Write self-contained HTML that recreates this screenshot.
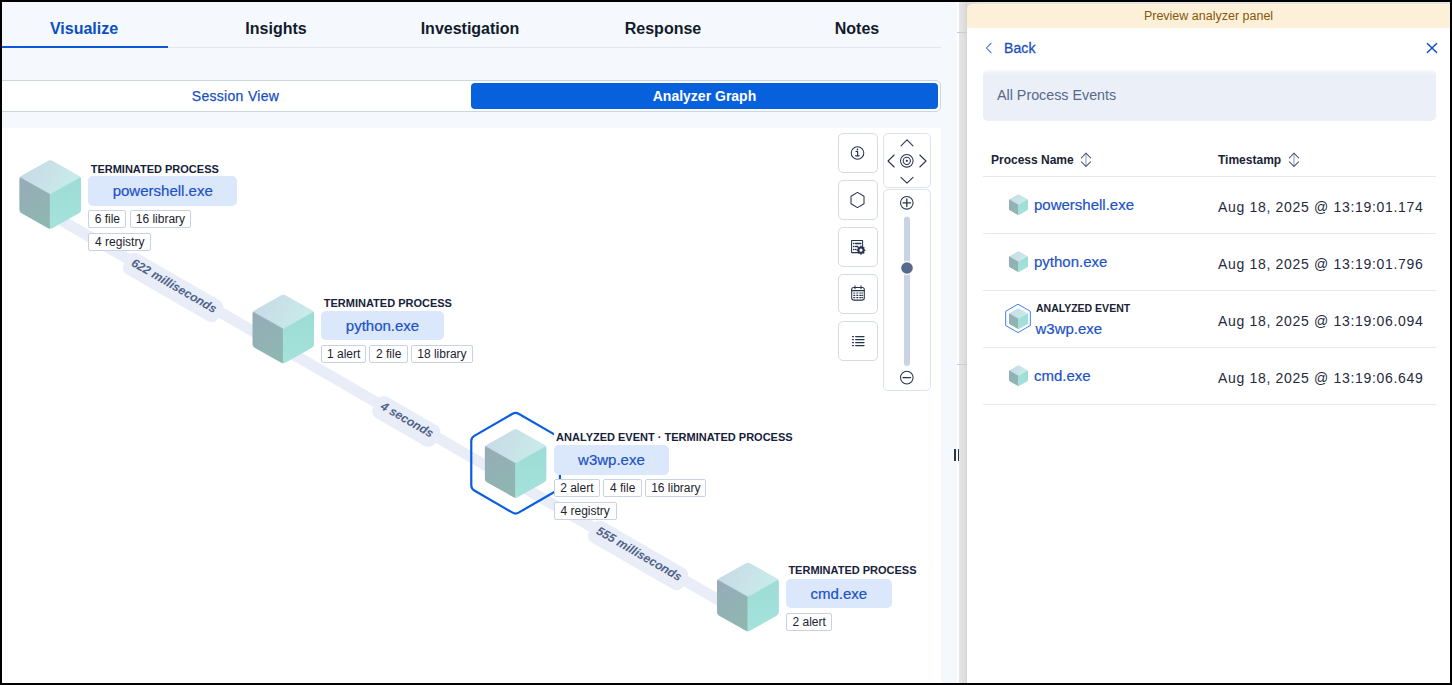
<!DOCTYPE html>
<html><head><meta charset="utf-8"><style>
*{box-sizing:border-box;margin:0;padding:0}
html,body{width:1452px;height:685px;overflow:hidden;background:#000}
body{position:relative;font-family:"Liberation Sans",sans-serif;color:#1a2333}
.a{position:absolute}
.tab{position:absolute;top:2px;height:45px;width:166px;text-align:center;font-weight:bold;font-size:16px;line-height:1;padding-top:19px;color:#111b2d}
.lbl{position:absolute;font-weight:bold;font-size:11px;height:16px;line-height:14px;color:#17223a;white-space:nowrap;background:#fff;padding-right:2px}
.pill{position:absolute;height:29.5px;background:#dbe7fb;border-radius:5px;color:#1b52c4;-webkit-text-stroke:0.2px #1b52c4;font-size:15px;line-height:29px;text-align:center;white-space:nowrap;padding:0 24.5px}
.tags{position:absolute;display:flex;flex-wrap:wrap;gap:4.5px 3.3px}
.tag{height:18px;border:1px solid #c9d2e2;border-radius:2px;background:#fff;font-size:12px;line-height:16px;color:#1d2330;padding:0;text-align:center;white-space:nowrap}
.btn{position:absolute;left:838px;width:40px;height:40px;border:1px solid #d5dce8;border-radius:5px;background:#fff}
.elbl{position:absolute;left:0;top:0;font-style:italic;font-weight:bold;font-size:12px;color:#4f6388;white-space:nowrap;line-height:21px;height:24px;padding:0 6.5px;background:#e8edf8;border-radius:8px;transform-origin:0 0}
.row{position:absolute;left:983px;width:453px;height:57px;border-bottom:1px solid #e3e8f1}
.ts{position:absolute;left:235px;font-size:14px;letter-spacing:0.68px;color:#1f2a3d;white-space:nowrap;line-height:1}
.pn{position:absolute;font-size:15px;color:#1b52c4;white-space:nowrap;line-height:1}
</style></head>
<body>
<div class="a" style="left:2px;top:2px;width:1448px;height:681px;background:#fff"></div>
<div class="a" style="left:2px;top:2px;width:955px;height:681px;background:#f5f8fc"></div>
<div class="tab" style="left:1px;color:#0b4fc2">Visualize</div>
<div class="tab" style="left:193px">Insights</div>
<div class="tab" style="left:387px">Investigation</div>
<div class="tab" style="left:580px">Response</div>
<div class="tab" style="left:774px">Notes</div>
<div class="a" style="left:2px;top:47px;width:939px;height:1px;background:#e1e6ef"></div>
<div class="a" style="left:2px;top:46px;width:166px;height:2px;background:#0b57d6"></div>
<div class="a" style="left:-4px;top:80px;width:945px;height:32px;background:#fff;border:1px solid #ccd4e2;border-radius:5px"></div>
<div class="a" style="left:1px;top:83px;width:469px;height:26px;text-align:center;font-size:14px;letter-spacing:0.3px;line-height:26px;color:#1b4fc0;-webkit-text-stroke:0.25px #1b4fc0">Session View</div>
<div class="a" style="left:471px;top:83px;width:467px;height:26px;background:#0761dc;border-radius:4px;text-align:center;font-size:14px;font-weight:bold;line-height:26px;color:#fff">Analyzer Graph</div>
<div class="a" style="left:2px;top:128px;width:939px;height:555px;background:#fff"></div>

<svg class="a" style="left:0;top:0" width="957" height="685" viewBox="0 0 957 685"><defs>
<linearGradient id="gt" x1="0" y1="0.2" x2="1" y2="0.5"><stop offset="0" stop-color="#c8d9e7"/><stop offset="1" stop-color="#c8ece9"/></linearGradient>
<linearGradient id="gl" x1="0" y1="0" x2="0.4" y2="1"><stop offset="0" stop-color="#97abb9"/><stop offset="1" stop-color="#8fb6b1"/></linearGradient>
<linearGradient id="gr" x1="0" y1="0" x2="0" y2="1"><stop offset="0" stop-color="#9ddcd6"/><stop offset="1" stop-color="#a5e2dc"/></linearGradient>
<clipPath id="cc"><path d="M28.39 1.47 Q31.00 0.00 33.61 1.47 L59.39 16.03 Q62.00 17.50 62.00 20.50 L62.00 49.50 Q62.00 52.50 59.39 53.97 L33.61 68.53 Q31.00 70.00 28.39 68.53 L2.61 53.97 Q0.00 52.50 0.00 49.50 L0.00 20.50 Q0.00 17.50 2.61 16.03Z"/></clipPath>
<g id="cube" clip-path="url(#cc)">
<path d="M31 0 L62 17.5 L31 35 L0 17.5Z" fill="url(#gt)" stroke="url(#gt)" stroke-width="0.6"/>
<path d="M0 17.5 L31 35 L31 70 L0 52.5Z" fill="url(#gl)" stroke="url(#gl)" stroke-width="0.6"/>
<path d="M31 35 L62 17.5 L62 52.5 L31 70Z" fill="url(#gr)" stroke="url(#gr)" stroke-width="0.6"/>
</g></defs><line x1="50.2" y1="214.0" x2="747.9" y2="616.9" stroke="#e8edf8" stroke-width="11"/><path d="M512.57 413.75 Q515.60 412.00 518.63 413.75 L556.91 435.85 Q559.94 437.60 559.94 441.10 L559.94 485.30 Q559.94 488.80 556.91 490.55 L518.63 512.65 Q515.60 514.40 512.57 512.65 L474.29 490.55 Q471.26 488.80 471.26 485.30 L471.26 441.10 Q471.26 437.60 474.29 435.85Z" fill="none" stroke="#0a5ee0" stroke-width="2.2"/><use href="#cube" x="19.2" y="159.5"/><use href="#cube" x="252.3" y="294.0"/><use href="#cube" x="484.6" y="428.5"/><use href="#cube" x="716.9" y="562.0"/></svg><div class="a" style="left:174.3px;top:285.7px;width:0;height:0"><div style="position:absolute;left:0;top:0;transform:rotate(30deg)"><div class="elbl" style="transform:translate(-50%,calc(-50% + 1.7px))">622 milliseconds</div></div></div><div class="a" style="left:407.1px;top:420.1px;width:0;height:0"><div style="position:absolute;left:0;top:0;transform:rotate(30deg)"><div class="elbl" style="transform:translate(-50%,calc(-50% + 1.7px))">4 seconds</div></div></div><div class="a" style="left:639.4px;top:554.2px;width:0;height:0"><div style="position:absolute;left:0;top:0;transform:rotate(30deg)"><div class="elbl" style="transform:translate(-50%,calc(-50% + 1.7px))">555 milliseconds</div></div></div><div class="lbl" style="left:88.2px;top:162.0px;padding-left:2.5px">TERMINATED PROCESS</div><div class="pill" style="left:88.2px;top:176.3px">powershell.exe</div><div class="tags" style="left:88.2px;top:210.0px;width:160px"><div class="tag" style="width:38.3px">6 file</div><div class="tag" style="width:61.3px">16 library</div><div class="tag" style="width:63.2px">4 registry</div></div><div class="lbl" style="left:321.3px;top:295.5px;padding-left:2.5px">TERMINATED PROCESS</div><div class="pill" style="left:321.3px;top:310.8px">python.exe</div><div class="tags" style="left:321.3px;top:344.5px;width:160px"><div class="tag" style="width:44.8px">1 alert</div><div class="tag" style="width:38.5px">2 file</div><div class="tag" style="width:61.4px">18 library</div></div><div class="lbl" style="left:553.6px;top:429.6px;padding-left:2.5px">ANALYZED EVENT · TERMINATED PROCESS</div><div class="pill" style="left:553.6px;top:445.3px">w3wp.exe</div><div class="tags" style="left:553.6px;top:479.0px;width:160px"><div class="tag" style="width:46.5px">2 alert</div><div class="tag" style="width:38.5px">4 file</div><div class="tag" style="width:61.3px">16 library</div><div class="tag" style="width:63.2px">4 registry</div></div><div class="lbl" style="left:785.9px;top:563.3px;padding-left:2.5px">TERMINATED PROCESS</div><div class="pill" style="left:785.9px;top:578.8px">cmd.exe</div><div class="tags" style="left:785.9px;top:612.5px;width:160px"><div class="tag" style="width:46.5px">2 alert</div></div>

<div class="btn" style="top:133px"></div>
<div class="btn" style="top:180px"></div>
<div class="btn" style="top:227px"></div>
<div class="btn" style="top:274px"></div>
<div class="btn" style="top:321px"></div>
<div class="a" style="left:883px;top:133px;width:48px;height:55px;border:1px solid #dde3ed;border-radius:5px;background:#fff"></div>
<div class="a" style="left:883px;top:189px;width:48px;height:202px;border:1px solid #dde3ed;border-radius:5px;background:#fff"></div>
<svg class="a" style="left:830px;top:125px" width="110" height="275" viewBox="830 125 110 275" fill="none" stroke="#27344d" stroke-width="1.05" stroke-linecap="round" stroke-linejoin="round">
 <!-- info -->
 <circle cx="857.5" cy="153" r="6.3"/>
 <path d="M856 151.3h1.6v4.4M855.6 155.8h3.6" stroke-width="1.2"/>
 <circle cx="857.5" cy="149.4" r="0.8" fill="#27344d" stroke="none"/>
 <!-- hexagon -->
 <path d="M857.5 192.4 L864 196.2 L864 203.8 L857.5 207.6 L851 203.8 L851 196.2 Z"/>
 <!-- table gear -->
 <path d="M859.5 252.6 H851.6 V240.5 H862.6 V246.5"/>
 <path d="M853.6 243.6h0.3M853.6 246.6h0.3M853.6 249.6h0.3M855.6 249.6h0.3M855.6 243.6h5.2M855.6 246.6h2" stroke-width="1.5"/>
 <circle cx="861" cy="250.2" r="2.6" stroke-width="2"/>
 <path d="M861 246.3v1M861 253.1v1M857.3 250.2h1M863.7 250.2h1M858.4 247.6l.7.7M863 252.2l.7.7M858.4 252.8l.7-.7M863 248.2l.7-.7" stroke-width="1.6"/>
 <!-- calendar -->
 <rect x="851.7" y="287.5" width="12.6" height="12.6" rx="2"/>
 <path d="M851.7 290.6h12.6M855 285.8v3M861 285.8v3"/>
 <path d="M853.8 293h1M856.8 293h1M859.8 293h1M862 293h.6M853.8 295.3h1M856.8 295.3h1M859.8 295.3h1M862 295.3h.6M853.8 297.6h1M856.8 297.6h1M859.8 297.6h1M862 297.6h.6" stroke-width="1.2"/>
 <!-- list -->
 <path d="M852.5 336.6h1M852.5 339.6h1M852.5 342.6h1M852.5 345.6h1M855.7 336.6h8.3M855.7 339.6h8.3M855.7 342.6h8.3M855.7 345.6h8.3" stroke-width="1.3"/>
 <!-- pan -->
 <path d="M901 145.9 L907 139.9 L913 145.9"/>
 <path d="M901 177.3 L907 183.1 L913 177.3"/>
 <path d="M894.2 155 L888 161 L894.2 167"/>
 <path d="M919.8 155 L926 161 L919.8 167"/>
 <circle cx="906.8" cy="160.8" r="6.3"/>
 <circle cx="906.8" cy="160.8" r="3.6"/>
 <circle cx="906.8" cy="160.8" r="1.1" fill="#27344d" stroke="none"/>
 <!-- zoom -->
 <circle cx="906.8" cy="202.8" r="6.3"/>
 <path d="M903 202.8h7.6M906.8 199v7.6" stroke-width="1.3"/>
 <circle cx="906.8" cy="377.6" r="6.3"/>
 <path d="M903 377.6h7.6" stroke-width="1.3"/>
 <rect x="904" y="216.5" width="6" height="149.5" rx="3" fill="#c9d3e3" stroke="none"/>
 <circle cx="907" cy="268" r="7" fill="#fff" stroke="none"/>
 <circle cx="907" cy="268" r="5.8" fill="#586a8b" stroke="none"/>
</svg>

<div class="a" style="left:957px;top:2px;width:2px;height:681px;background:#fff"></div><div class="a" style="left:959px;top:2px;width:8px;height:681px;background:linear-gradient(90deg,#e6e6e6,#dcdcdc 80%,#d2d2d2)"></div><div class="a" style="left:967px;top:2px;width:483px;height:2px;background:#e4e4e4"></div><div class="a" style="left:967px;top:2px;width:10px;height:10px;background:#dedede"></div><div class="a" style="left:957px;top:32px;width:10px;height:1px;background:#c5cddb"></div><div class="a" style="left:957px;top:364px;width:10px;height:1px;background:#c5cddb"></div><div class="a" style="left:967px;top:4px;width:483px;height:679px;background:#fff;border-top-left-radius:6px;overflow:hidden"><div style="height:24px;background:#fcf1d8;color:#85580b;font-size:12.5px;text-align:center;line-height:24px">Preview analyzer panel</div></div><svg class="a" style="left:980px;top:38px" width="20" height="20" viewBox="980 38 20 20" fill="none" stroke="#3368dc" stroke-width="1.05" stroke-linecap="round" stroke-linejoin="round"><path d="M991 43.4 L986.4 48 L991 52.6"/></svg><div class="a" style="left:1004px;top:40px;font-size:14px;line-height:16px;color:#1a4fc0;letter-spacing:0.1px;-webkit-text-stroke:0.3px #1a4fc0">Back</div><svg class="a" style="left:1420px;top:38px" width="20" height="20" viewBox="1420 38 20 20" fill="none" stroke="#0d47c6" stroke-width="1.4" stroke-linecap="round"><path d="M1427.4 43.5 L1436.6 52.6 M1436.6 43.5 L1427.4 52.6"/></svg><div class="a" style="left:983px;top:70px;width:453px;height:51px;border-radius:5px;background:linear-gradient(180deg,#f7f9fd 0,#ebf0f8 5px,#ebf0f8 100%)"></div><div class="a" style="left:997px;top:87px;font-size:14.3px;line-height:16px;color:#56698a">All Process Events</div><div class="a" style="left:991px;top:153px;font-size:12px;font-weight:bold;line-height:14px;color:#1a2333">Process Name</div><div class="a" style="left:1218px;top:153px;font-size:12px;font-weight:bold;line-height:14px;color:#1a2333">Timestamp</div><svg class="a" style="left:1078px;top:151px" width="16" height="18" viewBox="1078 151 16 18" fill="none" stroke-linecap="round" stroke-linejoin="round"><path d="M1086 153.6 V166" stroke="#aab6cb" stroke-width="1.4"/><path d="M1081.4 157.8 L1086 153.2 L1090.6 157.8 M1081.4 161.8 L1086 166.4 L1090.6 161.8" stroke="#4a5b7c" stroke-width="1.1"/></svg><svg class="a" style="left:1285.5px;top:151px" width="16" height="18" viewBox="1285.5 151 16 18" fill="none" stroke-linecap="round" stroke-linejoin="round"><path d="M1293.5 153.6 V166" stroke="#aab6cb" stroke-width="1.4"/><path d="M1288.9 157.8 L1293.5 153.2 L1298.1 157.8 M1288.9 161.8 L1293.5 166.4 L1298.1 161.8" stroke="#4a5b7c" stroke-width="1.1"/></svg><div class="a" style="left:983px;top:176px;width:453px;height:1px;background:#e3e8f1"></div><div class="a" style="left:983px;top:233px;width:453px;height:1px;background:#e3e8f1"></div><div class="a" style="left:1218px;top:200px;font-size:14px;letter-spacing:0.68px;line-height:14px;color:#1f2a3d;white-space:nowrap">Aug 18, 2025 @ 13:19:01.174</div><svg class="a" style="left:1008.5px;top:194px" width="19.00" height="21.45" viewBox="0 0 62 70"><use href="#cube"/></svg><div class="a" style="left:1034px;top:196px;font-size:15px;line-height:17px;color:#1b52c4;-webkit-text-stroke:0.2px #1b52c4">powershell.exe</div><div class="a" style="left:983px;top:290px;width:453px;height:1px;background:#e3e8f1"></div><div class="a" style="left:1218px;top:257px;font-size:14px;letter-spacing:0.68px;line-height:14px;color:#1f2a3d;white-space:nowrap">Aug 18, 2025 @ 13:19:01.796</div><svg class="a" style="left:1008.5px;top:251px" width="19.00" height="21.45" viewBox="0 0 62 70"><use href="#cube"/></svg><div class="a" style="left:1034px;top:253px;font-size:15px;line-height:17px;color:#1b52c4;-webkit-text-stroke:0.2px #1b52c4">python.exe</div><div class="a" style="left:983px;top:347px;width:453px;height:1px;background:#e3e8f1"></div><div class="a" style="left:1218px;top:314px;font-size:14px;letter-spacing:0.68px;line-height:14px;color:#1f2a3d;white-space:nowrap">Aug 18, 2025 @ 13:19:06.094</div><svg class="a" style="left:1000px;top:300px" width="36" height="36" viewBox="1000 300 36 36"><polygon points="1018.00,304.20 1030.30,311.30 1030.30,325.50 1018.00,332.60 1005.70,325.50 1005.70,311.30" fill="none" stroke="#3f7fea" stroke-width="1"/></svg><svg class="a" style="left:1009px;top:308px" width="19.00" height="21.45" viewBox="0 0 62 70"><use href="#cube"/></svg><div class="a" style="left:1036px;top:303px;font-size:10.5px;font-weight:bold;line-height:11px;color:#1a2333">ANALYZED EVENT</div><div class="a" style="left:1035.5px;top:320px;font-size:15px;line-height:17px;color:#1b52c4;-webkit-text-stroke:0.2px #1b52c4">w3wp.exe</div><div class="a" style="left:983px;top:404px;width:453px;height:1px;background:#e3e8f1"></div><div class="a" style="left:1218px;top:371px;font-size:14px;letter-spacing:0.68px;line-height:14px;color:#1f2a3d;white-space:nowrap">Aug 18, 2025 @ 13:19:06.649</div><svg class="a" style="left:1008.5px;top:365px" width="19.00" height="21.45" viewBox="0 0 62 70"><use href="#cube"/></svg><div class="a" style="left:1034px;top:367px;font-size:15px;line-height:17px;color:#1b52c4;-webkit-text-stroke:0.2px #1b52c4">cmd.exe</div><div class="a" style="left:954px;top:449px;width:2px;height:12px;background:#27344d"></div><div class="a" style="left:957.6px;top:449px;width:1.6px;height:12px;background:#27344d"></div><div class="a" style="left:0;top:0;width:2px;height:685px;background:#000"></div><div class="a" style="left:0;top:0;width:1452px;height:2px;background:#000"></div><div class="a" style="left:1450px;top:0;width:2px;height:685px;background:#000"></div><div class="a" style="left:0;top:683px;width:1452px;height:2px;background:#000"></div>
</body></html>
